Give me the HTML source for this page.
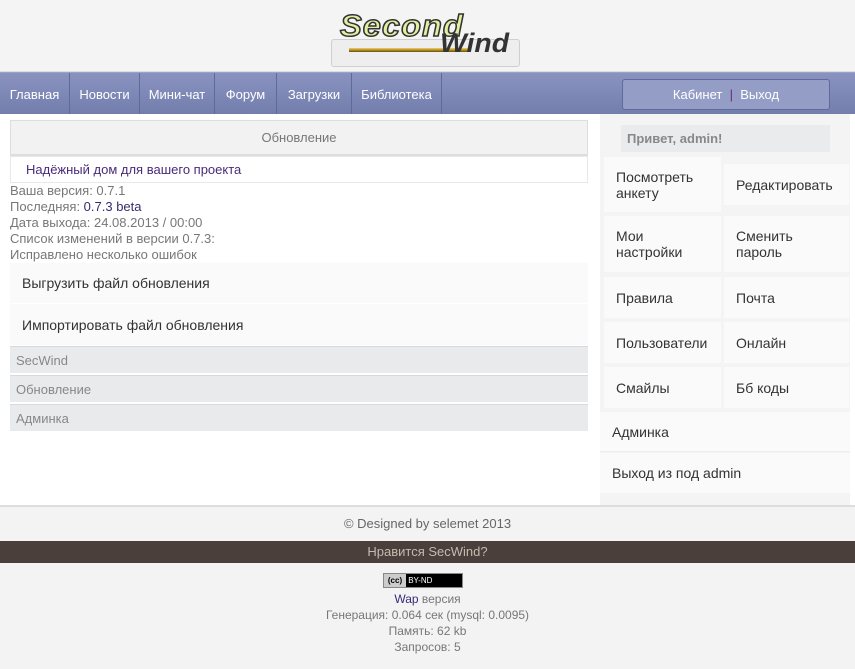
<!DOCTYPE html><html><head><meta charset="utf-8"><style>
*{margin:0;padding:0;box-sizing:border-box}
body{width:855px;height:669px;background:#f3f3f3;font-family:"Liberation Sans",sans-serif;font-size:13px;color:#333;position:relative;overflow:hidden}
.a{position:absolute}
.nav{left:0;top:72px;width:855px;height:42px;background:linear-gradient(#8a93c0,#737ead);border-top:1px solid #9aa2c8}
.nav span{position:absolute;top:0;height:42px;line-height:44px;color:#fff;font-size:13px;border-right:1px solid #5f6a99;text-align:center}
.cell{position:absolute;background:#fafafa;color:#333;font-size:14px;padding-left:12px;display:flex;align-items:center;line-height:16px}
.gbar{position:absolute;left:10px;width:578px;height:27px;background:#e8eaec;color:#888;font-size:13px;line-height:27px;padding-left:6px;border-top:1px solid #d7d9dc}
.info{left:10px;font-size:13px;color:#777;line-height:16px}
</style></head><body>
<div class="a" style="left:0;top:0;width:855px;height:72px;background:#f4f4f5;border-bottom:1px solid #ddd"></div>
<div class="a" style="left:331px;top:39px;width:189px;height:28px;border:1px solid #cfcfcf;border-radius:3px;background:#eee"></div>
<div class="a" style="left:349px;top:48px;width:120px;height:4px;background:linear-gradient(#f5d060,#6b5000)"></div>
<div class="a" style="left:340px;top:8px;font:italic 900 31px 'Liberation Sans',sans-serif;color:#e3eea0;-webkit-text-stroke:1.5px #333;letter-spacing:1px;transform:scaleX(1.05);transform-origin:left">Second</div>
<div class="a" style="left:440px;top:28px;font:italic 900 27px 'Liberation Sans',sans-serif;color:#333;letter-spacing:0px;transform:scaleX(1.05);transform-origin:left">Wind</div>
<div class="a nav">
<span style="left:0;width:70px">Главная</span>
<span style="left:70px;width:70px">Новости</span>
<span style="left:140px;width:75px">Мини-чат</span>
<span style="left:215px;width:62px">Форум</span>
<span style="left:277px;width:75px">Загрузки</span>
<span style="left:352px;width:90px">Библиотека</span>
</div>
<div class="a" style="left:622px;top:79px;width:208px;height:31px;border:1px solid #5f6a99;border-radius:3px;background:#949dc6;color:#fff;text-align:center;line-height:30px">Кабинет &nbsp;<span style="color:#6a2a7a">|</span>&nbsp; Выход</div>
<div class="a" style="left:0;top:114px;width:855px;height:391px;background:#fff"></div>
<div class="a" style="left:600px;top:114px;width:250px;height:391px;background:#f4f4f4"></div>
<div class="a" style="left:10px;top:120px;width:578px;height:36px;background:#f2f2f2;border:1px solid #ddd;border-bottom:2px solid #ddd;text-align:center;line-height:34px;color:#777">Обновление</div>
<div class="a" style="left:10px;top:156px;width:578px;height:27px;border:1px solid #e8e8e8;padding-left:15px;line-height:25px;color:#4a2a7a">Надёжный дом для вашего проекта</div>
<div class="a info" style="top:183px">Ваша версия: 0.7.1<br>Последняя: <span style="color:#3a2a6a">0.7.3 beta</span><br>Дата выхода: 24.08.2013 / 00:00<br>Список изменений в версии 0.7.3:<br>Исправлено несколько ошибок</div>
<div class="cell" style="left:10px;top:263px;width:578px;height:40px">Выгрузить файл обновления</div>
<div class="cell" style="left:10px;top:304px;width:578px;height:41px">Импортировать файл обновления</div>
<div class="gbar" style="top:346px">SecWind</div>
<div class="gbar" style="top:375px">Обновление</div>
<div class="gbar" style="top:404px">Админка</div>
<div class="a" style="left:621px;top:125px;width:209px;height:27px;background:#e9ebec;color:#888;font-weight:bold;line-height:27px;padding-left:6px">Привет, admin!</div>
<div class="cell" style="left:604px;top:157px;width:117px;height:55px">Посмотреть<br>анкету</div>
<div class="cell" style="left:724px;top:164px;width:125px;height:41px">Редактировать</div>
<div class="cell" style="left:604px;top:216px;width:117px;height:56px">Мои<br>настройки</div>
<div class="cell" style="left:724px;top:216px;width:125px;height:56px">Сменить<br>пароль</div>
<div class="cell" style="left:604px;top:277px;width:117px;height:41px">Правила</div>
<div class="cell" style="left:724px;top:277px;width:125px;height:41px">Почта</div>
<div class="cell" style="left:604px;top:322px;width:117px;height:41px">Пользователи</div>
<div class="cell" style="left:724px;top:322px;width:125px;height:41px">Онлайн</div>
<div class="cell" style="left:604px;top:367px;width:117px;height:41px">Смайлы</div>
<div class="cell" style="left:724px;top:367px;width:125px;height:41px">Бб коды</div>
<div class="cell" style="left:600px;top:412px;width:250px;height:40px;border-bottom:1px solid #eee">Админка</div>
<div class="cell" style="left:600px;top:453px;width:250px;height:40px">Выход из под admin</div>
<div class="a" style="left:0;top:505px;width:855px;height:36px;background:#f3f3f3;border-top:2px solid #ddd;text-align:center;line-height:34px;color:#666;font-size:13px">© Designed by selemet 2013</div>
<div class="a" style="left:0;top:541px;width:855px;height:22px;background:#4a3f3a;color:#c8b8b0;text-align:center;line-height:22px">Нравится SecWind?</div>
<div class="a" style="left:383px;top:573px;width:80px;height:15px;background:#000;border:1px solid #888;color:#fff;font-size:8px;line-height:13px"><span style="display:inline-block;background:#ccc;color:#000;width:22px;text-align:center;font-weight:bold">(cc)</span> BY-ND</div>
<div class="a" style="left:0;top:591px;width:855px;text-align:center;color:#777;font-size:12px;line-height:16px"><span style="color:#3a2a7a">Wap</span> версия<br>Генерация: 0.064 сек (mysql: 0.0095)<br>Память: 62 kb<br>Запросов: 5</div>
</body></html>
